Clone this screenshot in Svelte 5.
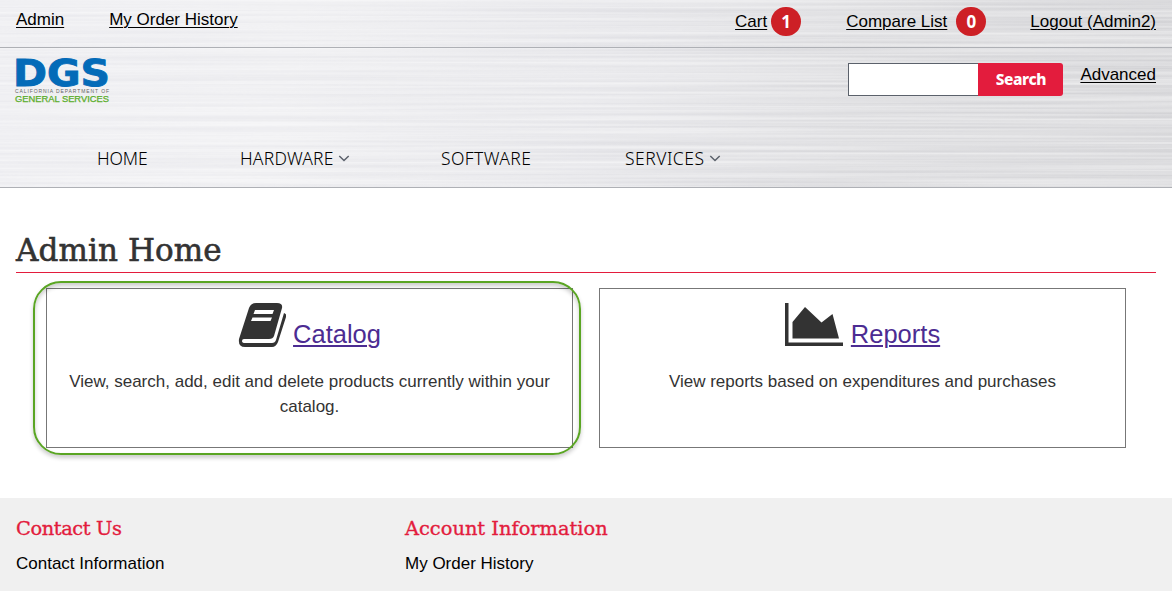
<script>
  const nav = [
    { label: 'HOME', width: 143, spacing: -0.15 },
    { label: 'HARDWARE', width: 201, spacing: 0.2, menu: true },
    { label: 'SOFTWARE', width: 184, spacing: 0.4 },
    { label: 'SERVICES', width: 130, spacing: 0.5, menu: true }
  ];
</script>

<header>
  <svg class="metal" preserveAspectRatio="none" aria-hidden="true">
    <filter id="brushed" x="0" y="0" width="100%" height="100%">
      <feTurbulence type="fractalNoise" baseFrequency="0.0022 0.34" numOctaves="2" seed="8" />
      <feColorMatrix type="matrix" values="0 0 0 0 1  0 0 0 0 1  0 0 0 0 1  1.5 0 0 0 -0.35" />
    </filter>
    <rect width="100%" height="100%" filter="url(#brushed)" />
  </svg>
  <div class="top">
    <nav class="left"><a href="#admin">Admin</a><a href="#orders">My Order History</a></nav>
    <div class="right">
      <a href="#cart">Cart</a><span class="badge cart">1</span>
      <a href="#compare">Compare List</a><span class="badge compare">0</span>
      <a href="#logout">Logout (Admin2)</a>
    </div>
  </div>
  <div class="brand">
    <svg class="logo" width="96" height="48" viewBox="0 0 96 48">
      <text class="dgs" x="-2" y="28.500" textLength="97" lengthAdjust="spacingAndGlyphs">DGS</text>
      <text class="dept" x="0" y="36" textLength="94" lengthAdjust="spacing">CALIFORNIA DEPARTMENT OF</text>
      <text class="gs" x="0" y="45" textLength="94" lengthAdjust="spacingAndGlyphs">GENERAL SERVICES</text>
    </svg>
    <form class="search">
      <input aria-label="Search" /><button type="button">Search</button>
      <a href="#advanced">Advanced</a>
    </form>
  </div>
  <nav class="main">
    {#each nav as item}
      <a href="#nav" style="width: {item.width}px">
        <span style="letter-spacing: {item.spacing}px">{item.label}</span>
        {#if item.menu}
          <svg width="12" height="8" viewBox="0 0 12 8"><path d="M1.300 1 6 5.500l4.700-4.500" fill="none" stroke="#5b616b" stroke-width="1.500" /></svg>
        {/if}
      </a>
    {/each}
  </nav>
</header>

<main>
  <h1><span>Admin Home</span></h1>
  <div class="cards">
    <section class="selected">
      <div class="title">
        <svg class="book" width="48" height="46" viewBox="0 0 48 46">
          <path fill="#333" fill-rule="evenodd" d="M18 1H39Q45 1 44 6L36 34Q35 37 31 37H6Q4 37 4 39Q4 41 7 41H34Q37 41 38 38L46 11Q49 12 48 15L40 40Q38 45 34 45H7Q0 45 1 37L11 6Q13 1 18 1ZM17 8 15.500 12H34.500L36 8ZM14.500 15.500 13 19H32.500L34 15.500Z" />
        </svg>
        <a href="#catalog">Catalog</a>
      </div>
      <p>View, search, add, edit and delete products currently within your catalog.</p>
      <div class="ring"></div>
    </section>
    <section>
      <div class="title">
        <svg class="chart" width="59" height="45" viewBox="0 0 59 45">
          <path fill="#333" d="M0 1H3.500V40.500H58V44H0ZM7.500 20 20 5 36.500 20.500 47.500 12 54 36.500H7.500Z" />
        </svg>
        <a href="#reports">Reports</a>
      </div>
      <p>View reports based on expenditures and purchases</p>
    </section>
  </div>
</main>

<footer>
  <section><h2 class="contact">Contact Us</h2><a href="#contact">Contact Information</a></section>
  <section><h2>Account Information</h2><a href="#history">My Order History</a></section>
</footer>

<style>
  :global(body) { margin: 0; background: #fff; }
  :global(#app) { font: 17px/25px "Liberation Sans", Arial, sans-serif; color: #333; }
  header, main, footer, header *, main *, footer * { box-sizing: border-box; }
  a { color: #000; text-underline-offset: 2px; text-decoration-thickness: 1px; }
  header {
    position: relative; height: 188px; border-bottom: 1px solid #aeb0b5; overflow: hidden;
    background: linear-gradient(100deg, #ebebef 0%, #ececef 25%, #e3e3e7 50%, #d9d9dc 72%, #d3d3d6 100%);
  }
  .metal { position: absolute; inset: 0; width: 100%; height: 100%; opacity: .6; }
  .top, .brand, .main { position: relative; }
  .top { display: flex; justify-content: space-between; height: 48px; border-bottom: 1px solid #aeb0b5; padding: 0 16px; }
  .left { display: flex; gap: 45px; padding-top: 7px; }
  .right { display: flex; align-items: flex-start; padding-top: 7px; }
  .right a { margin-top: 2px; }
  .badge { width: 30px; height: 29px; border-radius: 15px; background: #cd2026; color: #fff; font: bold 17px/29px "Open Sans", sans-serif; text-align: center; }
  .cart { margin: 0 45px 0 4px; }
  .compare { margin: 0 44px 0 9px; }
  .brand { display: flex; justify-content: space-between; height: 72px; padding: 9px 16px 0 15px; }
  .logo { overflow: visible; }
  .dgs { font: bold 36.500px "DejaVu Sans", sans-serif; fill: #046bb8; stroke: #046bb8; stroke-width: .9; }
  .dept { font: 5px "Liberation Sans", sans-serif; fill: #666; }
  .gs { font: 8.300px "Liberation Sans", sans-serif; fill: #5aad2b; stroke: #5aad2b; stroke-width: .25; }
  .search { display: flex; align-items: flex-start; padding-top: 6px; }
  input { width: 130px; height: 33px; margin: 0; padding: 0 8px; border: 1px solid #5b616b; border-right: 0; border-radius: 0; background: #fff; }
  button { width: 85px; height: 33px; padding: 0; border: 0; border-radius: 0 3px 3px 0; background: #e31c3d; color: #fff; font: 800 15.500px/33px "Noto Sans", sans-serif; letter-spacing: -.4px; }
  .search a { margin: -1px 0 0 17px; }
  .main { display: flex; padding: 26px 0 0 97px; }
  .main a { display: flex; align-items: center; gap: 4px; text-decoration: none; font: 350 17.500px/25px "Noto Sans", sans-serif; font-stretch: 90%; white-space: nowrap; }
  main { height: 310px; padding: 41px 16px 0; }
  h1 { height: 44px; margin: 0; border-bottom: 1px solid #e31c3d; font: 400 31px/42px "DejaVu Serif", serif; letter-spacing: .1px; color: #333; -webkit-text-stroke: .6px #333; }
  .cards { display: grid; grid-template-columns: 527px 527px; gap: 26px; padding: 15px 0 0 30px; }
  .cards section { position: relative; height: 160px; border: 1px solid #777; text-align: center; padding: 13px 20px 0; }
  .title { display: flex; justify-content: center; gap: 7px; height: 67px; }
  .title a { color: #4c2c92; font-size: 25.500px; line-height: 34px; margin-top: 15px; text-decoration-thickness: 2px; text-underline-offset: 2px; }
  p { margin: 0; }
  .ring { position: absolute; inset: -8.500px -9px -8px -14.500px; border: 2px solid #5aa523; border-radius: 28px; box-shadow: 0 3px 4px #0003, inset 0 3px 4px #0003; }
  footer { display: grid; grid-template-columns: 389px 1fr; height: 93px; background: #f0f0f0; padding: 18px 16px 0; }
  footer a { text-decoration: none; }
  h2 { margin: 0 0 9px; font: 19.400px/26px "DejaVu Serif", serif; color: #e31c3d; -webkit-text-stroke: .35px #e31c3d; }
  .contact { letter-spacing: -.4px; }
</style>
